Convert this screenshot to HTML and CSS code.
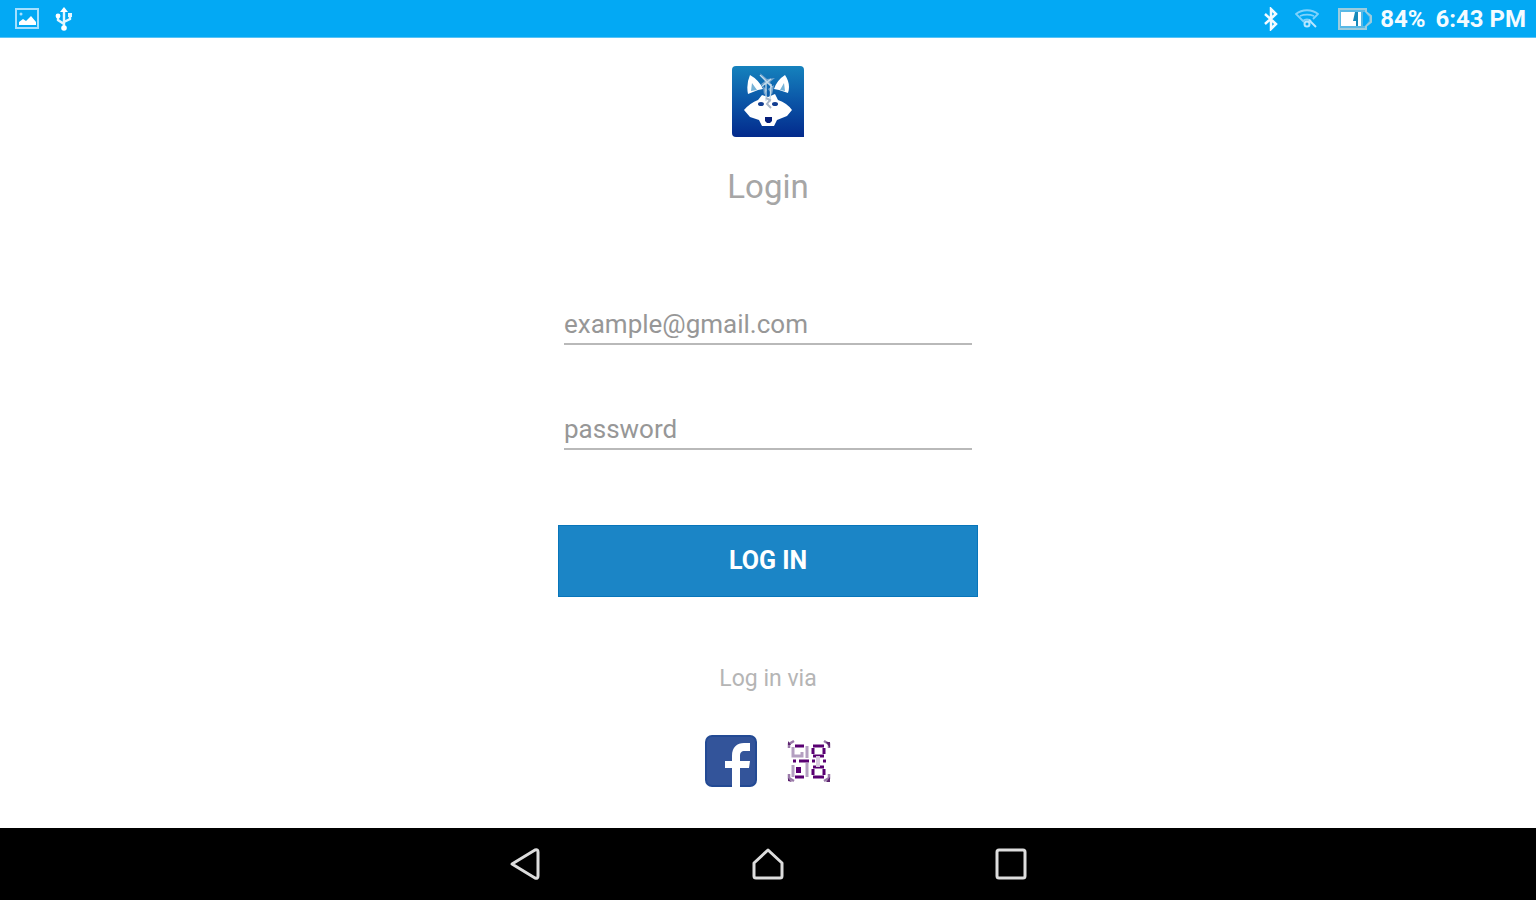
FILE: index.html
```html
<!DOCTYPE html>
<html lang="en">
<head>
<meta charset="utf-8">
<meta name="viewport" content="width=device-width, initial-scale=1">
<title>Login</title>
<link rel="stylesheet" href="styles.css">
</head>
<body class="screen">
<header class="status">
  <div class="status-left">
    <svg width="26" height="22" viewBox="0 0 26 22" aria-hidden="true"><rect x="2" y="1" width="22" height="19" fill="none" stroke="#a5e0ff" stroke-width="2"/><path d="M5 17v-3l4-3 3 2 5-5 5 6v3z" fill="#fff"/><circle cx="7" cy="6" r="1.500" fill="#a5e0ff"/></svg>
    <svg width="20" height="26" viewBox="0 0 20 26" aria-hidden="true"><g fill="none" stroke="#e4f6ff" stroke-width="2.400"><path d="M10 4v18M10 18l-6-4v-4M10 16l6-3V9"/></g><path d="M10 1l4 5H6z" fill="#fff"/><circle cx="4" cy="10" r="2.400" fill="#fff"/><path d="M14 7h4v4h-4z" fill="#e4f6ff"/><circle cx="10" cy="22" r="2.800" fill="#fff"/></svg>
  </div>
  <div class="status-right">
    <svg width="16" height="24" viewBox="0 0 16 24" aria-hidden="true"><path d="M2 7l11 10-5 5V2l5 5L2 17" fill="none" stroke="#f4fbff" stroke-width="2.500"/></svg>
    <svg class="wifi" width="24" height="20" viewBox="0 0 24 20" aria-hidden="true"><g fill="none" stroke="#7fd2fc" stroke-width="1.800"><path d="M9 13L1 5c6-5 16-5 22 0l-5 5M5 7c5-2 9-2 14 0M8 12c2-2 6-2 8 0"/></g><g fill="none" stroke="#b8e6ff" stroke-width="2"><circle cx="12" cy="15" r="2.500"/><path d="M14 11l7 7"/></g></svg>
    <svg class="battery" width="36" height="24" viewBox="0 0 36 24" aria-hidden="true"><path d="M2 2h27v3l5 4v6l-5 4v3H2z" fill="#58b9e6" stroke="#9bccde" stroke-width="2"/><path d="M4 5h20v14H4z" fill="#fff"/><path d="M26 5h2l4 5v4l-4 5h-2z" fill="#08a9f5"/><path d="M18 5h3v14h-2v-5h-3z" fill="#1689ba"/></svg>
    <span>84%</span>
    <span>6:43 PM</span>
  </div>
</header>
<main class="content">
  <svg class="logo" width="72" height="71" viewBox="0 0 72 71" role="img" aria-label="Wolf logo">
    <defs><linearGradient id="sky" x1="0" y1="0" x2="0" y2="1"><stop offset="0" stop-color="#1582bd"/><stop offset=".5" stop-color="#0b55a7"/><stop offset="1" stop-color="#032a8c"/></linearGradient></defs>
    <path d="M4 0h64q4 0 4 4v67H4q-4 0-4-4V4q0-4 4-4z" fill="url(#sky)"/>
    <path d="M18 9q9 5 13 14l-5 1-10 4q-2-10 2-19zM53 9q-8 5-11 14l5 1 9 3q3-9-3-18z" fill="#fff"/>
    <path d="M20 17l5 7-6 1zM52 17l-4 7 5 1z" fill="#76b3d7"/>
    <path d="M30 29l6 2 7-3 3 6q9 3 14 10l-5 6-10 4-3 6H30l-3-6-9-3-6-7q6-7 14-10z" fill="#fff"/>
    <path d="M28 7l7 6 8-1-5 4 4 7-6-5-8 1 5-4zM31 20l4 4-3 5zM42 19l-2 10-4-6z" fill="#78a6ce"/>
    <path d="M28 9l12 12M29 21l10-8M34 17v18M39 18l-1 18" stroke="#c5dceb" stroke-width="1.300" fill="none"/>
    <path d="M34 32l4 2-3 4 4 4" stroke="#a9b6c7" stroke-width="2" fill="none"/>
    <ellipse cx="29" cy="38" rx="3" ry="2" fill="#123d90"/><ellipse cx="43" cy="38" rx="3" ry="2" fill="#123d90"/>
    <path d="M33 51h7v4l-2 2h-3l-2-2z" fill="#071f7a"/>
  </svg>
  <h1 class="title">Login</h1>
  <form class="form">
    <input class="field" type="email" placeholder="example@gmail.com" aria-label="Email">
    <input class="field" type="password" placeholder="password" aria-label="Password">
    <button class="submit" type="button">LOG IN</button>
  </form>
  <p class="via">Log in via</p>
  <div class="providers">
    <button class="provider" type="button" aria-label="Facebook">
      <svg width="52" height="52" viewBox="0 0 52 52"><rect x="1" y="1" width="50" height="50" rx="6" fill="#33549a" stroke="#234a94" stroke-width="2"/><path d="M27 52V33h-7v-7h7v-5c0-9 5-13 12-13h6v8h-5c-4 0-5 2-5 5v5h10l-1 7h-9v19z" fill="#fff"/></svg>
    </button>
    <button class="provider" type="button" aria-label="QR code">
      <svg width="44" height="44" viewBox="0 0 44 44"><g fill="none" stroke="#9a7aa9" stroke-width="2.500"><path d="M2 9V5l5-3M37 2l5 3v4M2 35v4l5 3M37 42l5-3v-4"/></g><path d="M1 2l3 4H1zM43 3v6l-4-6zM1 39l4 4-4-1zM43 38v5h-4z" fill="#5c226e"/><g fill="none" stroke="#b49fc1" stroke-width="3"><path d="M6 8v9h9v-4M20 7v12M20 24v14M6 26v12"/></g><path d="M8 7h9M8 38h9M6 22h3M12 22h10" stroke="#590072" stroke-width="3"/><path d="M9 28h5v6H9z" fill="#590072"/><g fill="none" stroke="#590072" stroke-width="3"><path d="M26 7h11M26 17h11M26 28h11M26 38h11M26 9v6M37 9v6M26 30v6M37 30v6M25 22h3M36 22h3"/></g><path d="M31 17v11" stroke="#d9cadf" stroke-width="4"/></svg>
    </button>
  </div>
</main>
<nav class="navbar" aria-label="System">
  <button class="nav-button" type="button" aria-label="Back"><svg width="34" height="34" viewBox="0 0 34 34"><path d="M4 17L27 3q3-1 3 2v24q0 3-3 2z" fill="none" stroke="#ddd" stroke-width="3" stroke-linejoin="round"/></svg></button>
  <button class="nav-button" type="button" aria-label="Home"><svg width="34" height="34" viewBox="0 0 34 34"><path d="M17 3L3 16v13q0 2 2 2h24q2 0 2-2V16z" fill="none" stroke="#ddd" stroke-width="3" stroke-linejoin="round"/></svg></button>
  <button class="nav-button" type="button" aria-label="Recent apps"><svg width="34" height="34" viewBox="0 0 34 34"><rect x="3" y="3" width="28" height="28" rx="2" fill="none" stroke="#ddd" stroke-width="3"/></svg></button>
</nav>
</body>
</html>
```
FILE: styles.css
```css
* {
  box-sizing: border-box;
}

svg {
  display: block;
  flex: none;
}

.screen {
  margin: 0;
  min-height: 100vh;
  display: flex;
  flex-direction: column;
  background: #fff;
  font-family: Roboto, "Liberation Sans", sans-serif;
}

.status {
  display: flex;
  align-items: center;
  justify-content: space-between;
  height: 38px;
  padding: 0 10px 0 14px;
  background: #03a9f4;
  border-bottom: 1px solid #58c3f7;
  color: #f4fbff;
  font-size: 24px;
  font-weight: 700;
  line-height: 38px;
}

.status-left {
  display: flex;
  align-items: center;
  gap: 14px;
}

.status-right {
  display: flex;
  align-items: center;
  gap: 10px;
}

.wifi {
  margin: 0 8px 0 6px;
}

.battery {
  margin-right: -3px;
}

.content {
  flex: 1;
  display: flex;
  flex-direction: column;
  align-items: center;
  padding: 28px 16px 40px;
}

.title {
  margin: 30px 0 0;
  color: #a6a6a6;
  font-size: 33px;
  font-weight: 400;
  line-height: 40px;
}

.form {
  display: flex;
  flex-direction: column;
  width: 100%;
  max-width: 420px;
  margin-top: 97px;
}

.field {
  height: 41px;
  margin: 0 6px 64px;
  padding: 0;
  border: 0;
  border-bottom: 2px solid #b9b9b9;
  border-radius: 0;
  outline: 0;
  background: none;
  color: #555;
  font: 400 26px/32px Roboto, "Liberation Sans", sans-serif;
}

.field::placeholder {
  color: #979797;
  opacity: 1;
}

.submit {
  height: 72px;
  margin-top: 11px;
  padding: 0;
  border: 1px solid #0875ba;
  background: #1b85c6;
  color: #fff;
  font: 700 25px/32px Roboto, "Liberation Sans", sans-serif;
}

.via {
  margin: 66px 0 0;
  color: #b5b5b5;
  font-size: 23px;
  line-height: 32px;
}

.providers {
  display: flex;
  align-items: center;
  gap: 30px;
  margin-top: 40px;
}

.provider {
  padding: 0;
  border: 0;
  background: none;
}

.navbar {
  display: flex;
  align-items: center;
  justify-content: center;
  gap: 209px;
  height: 72px;
  background: #000;
}

.nav-button {
  padding: 0;
  border: 0;
  background: none;
}
```
